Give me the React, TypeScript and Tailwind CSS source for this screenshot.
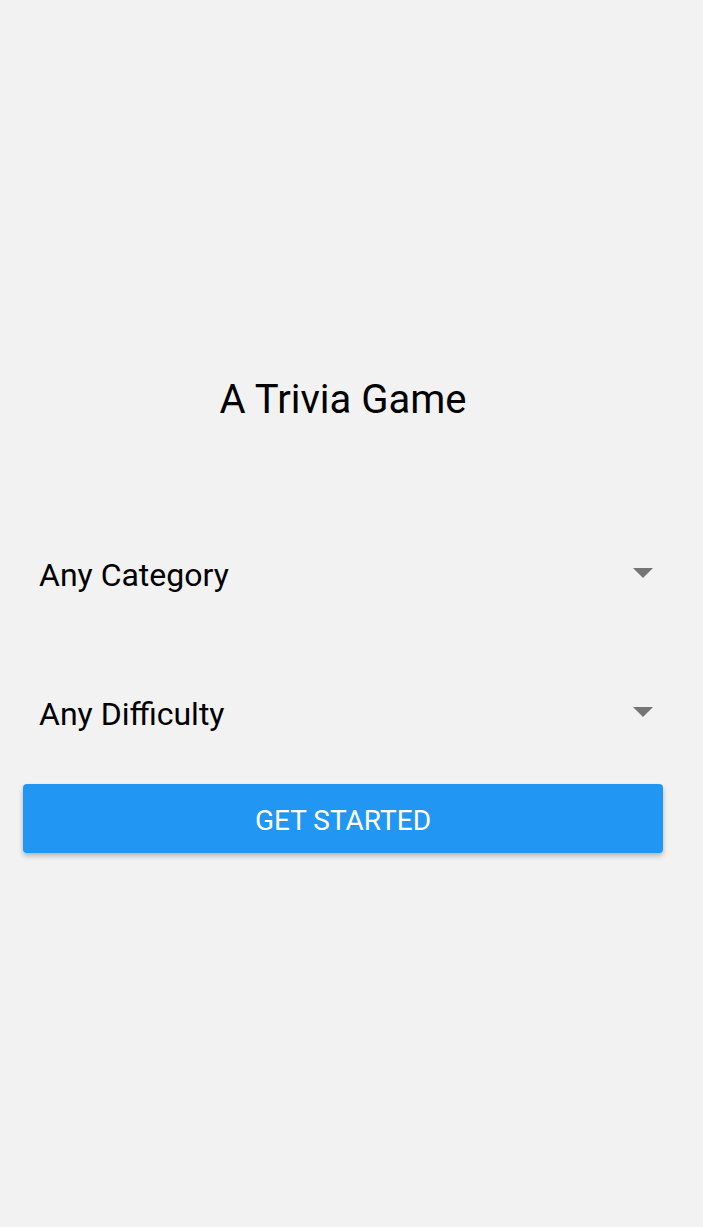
import React from "react";

function Select({ label }: { label: string }) {
  return (
    <div className="flex h-[56px] items-center justify-between pl-[16px] pr-[10px]">
      <span className="text-[32px] text-black leading-none">{label}</span>
      <svg width="20" height="10" viewBox="0 0 20 10" className="mt-[-4px]">
        <polygon points="0,0 20,0 10,10" fill="#757575" />
      </svg>
    </div>
  );
}

export default function App() {
  return (
    <div
      className="min-h-[1227px] w-full bg-[#f2f2f2] pl-[23px] pr-[40px] pt-[372px]"
      style={{ fontFamily: "Roboto, 'Noto Sans', sans-serif" }}
    >
      <div className="flex h-[56px] items-center justify-center">
        <h1 className="text-[40px] text-black leading-none">A Trivia Game</h1>
      </div>
      <div className="mt-[119px]">
        <Select label="Any Category" />
      </div>
      <div className="mt-[83px]">
        <Select label="Any Difficulty" />
      </div>
      <button className="mt-[42px] flex h-[69px] w-full items-center justify-center rounded-[4px] bg-[#2196f3] pt-[4px] text-[28px] text-white shadow-[0_3px_5px_rgba(0,0,0,0.25)]">
        GET STARTED
      </button>
    </div>
  );
}
